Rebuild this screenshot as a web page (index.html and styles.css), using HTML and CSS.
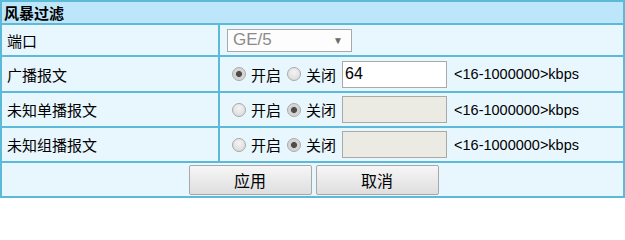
FILE: index.html
```html
<!DOCTYPE html>
<html lang="zh-CN">
<head>
<meta charset="utf-8">
<title>风暴过滤</title>
<link rel="stylesheet" href="styles.css">
</head>
<body>
<div class="panel">
  <div class="head">风暴过滤</div>

  <div class="label r1">端口</div>
  <div class="field r1">
    <div class="select"><span>GE/5</span><span class="arrow">▼</span></div>
  </div>

  <div class="label r2">广播报文</div>
  <div class="field r2">
    <input type="radio" class="radio" name="bc" checked disabled><span class="opt">开启</span>
    <input type="radio" class="radio" name="bc" disabled><span class="opt">关闭</span>
    <input type="text" class="text" value="64">
    <span class="unit">&lt;16-1000000&gt;kbps</span>
  </div>

  <div class="label r3">未知单播报文</div>
  <div class="field r3">
    <input type="radio" class="radio" name="uc" disabled><span class="opt">开启</span>
    <input type="radio" class="radio" name="uc" checked disabled><span class="opt">关闭</span>
    <input type="text" class="text" disabled>
    <span class="unit">&lt;16-1000000&gt;kbps</span>
  </div>

  <div class="label r4">未知组播报文</div>
  <div class="field r4">
    <input type="radio" class="radio" name="mc" disabled><span class="opt">开启</span>
    <input type="radio" class="radio" name="mc" checked disabled><span class="opt">关闭</span>
    <input type="text" class="text" disabled>
    <span class="unit">&lt;16-1000000&gt;kbps</span>
  </div>

  <div class="actions">
    <button class="btn">应用</button>
    <button class="btn">取消</button>
  </div>
</div>
</body>
</html>
```

FILE: styles.css
```css
* { box-sizing: border-box; }

body {
  margin: 0;
  background: #ffffff;
  font-family: "Liberation Sans", "Noto Sans CJK SC", sans-serif;
  color: #000;
}

.panel {
  width: 625px;
  display: grid;
  grid-template-columns: 216px 1fr;
  grid-template-rows: 21px 30px 34px 33px 33px 33px;
  gap: 2px;
  padding: 2px;
  background: #5cb9d7;
}

.head {
  grid-column: 1 / 3;
  background: #bee6fb;
  font-family: "Noto Sans CJK SC", sans-serif;
  font-weight: bold;
  font-size: 15px;
  line-height: 21px;
  padding-left: 2px;
}

.label {
  background: #e8f6fe;
  font-family: "Noto Sans CJK SC", sans-serif;
  font-size: 15px;
  display: flex;
  align-items: center;
  padding-left: 5px;
}

.field {
  background: #e8f6fe;
  display: flex;
  align-items: center;
  padding-left: 7px;
}

.select {
  width: 125px;
  height: 23px;
  border: 1px solid #a9a9a9;
  background: #fdfdfd;
  color: #8a8a8a;
  font-size: 17px;
  display: flex;
  align-items: center;
  justify-content: space-between;
  padding: 0 8px 0 5px;
}

.arrow {
  font-size: 10px;
  color: #6a6a6a;
}

.radio {
  appearance: none;
  -webkit-appearance: none;
  width: 14px;
  height: 14px;
  margin: 0 5px 0 5px;
  border-radius: 50%;
  border: 1px solid #a8a8a8;
  background: radial-gradient(circle at 50% 35%, #f4f4f4 0%, #d6d6d6 100%);
}

.radio:checked {
  background: radial-gradient(circle, #4d4d4d 0, #4d4d4d 2.6px, #cfcfcf 3.4px, #e4e4e4 100%);
}

.opt {
  font-family: "Noto Sans CJK SC", sans-serif;
  font-size: 15px;
  margin-right: 1px;
}

.text {
  width: 105px;
  height: 27px;
  margin-left: 5px;
  border: 1px solid #a9a9a9;
  background: #ffffff;
  font-family: "Liberation Sans", sans-serif;
  font-size: 16px;
  padding: 0 2px;
  color: #000;
}

.text:disabled {
  background: #ebebe4;
}

.unit {
  margin-left: 7px;
  font-size: 14.5px;
}

.actions {
  grid-column: 1 / 3;
  background: #e8f6fe;
  display: flex;
  justify-content: center;
  align-items: flex-start;
  gap: 4px;
  padding-top: 2px;
  padding-left: 2px;
}

.btn {
  width: 123px;
  height: 30px;
  border: 1px solid #a8a8a8;
  border-radius: 2px;
  background: linear-gradient(#f6f6f6, #dedede);
  font-family: "Noto Sans CJK SC", sans-serif;
  font-size: 16px;
  color: #000;
  padding: 0;
}
```
